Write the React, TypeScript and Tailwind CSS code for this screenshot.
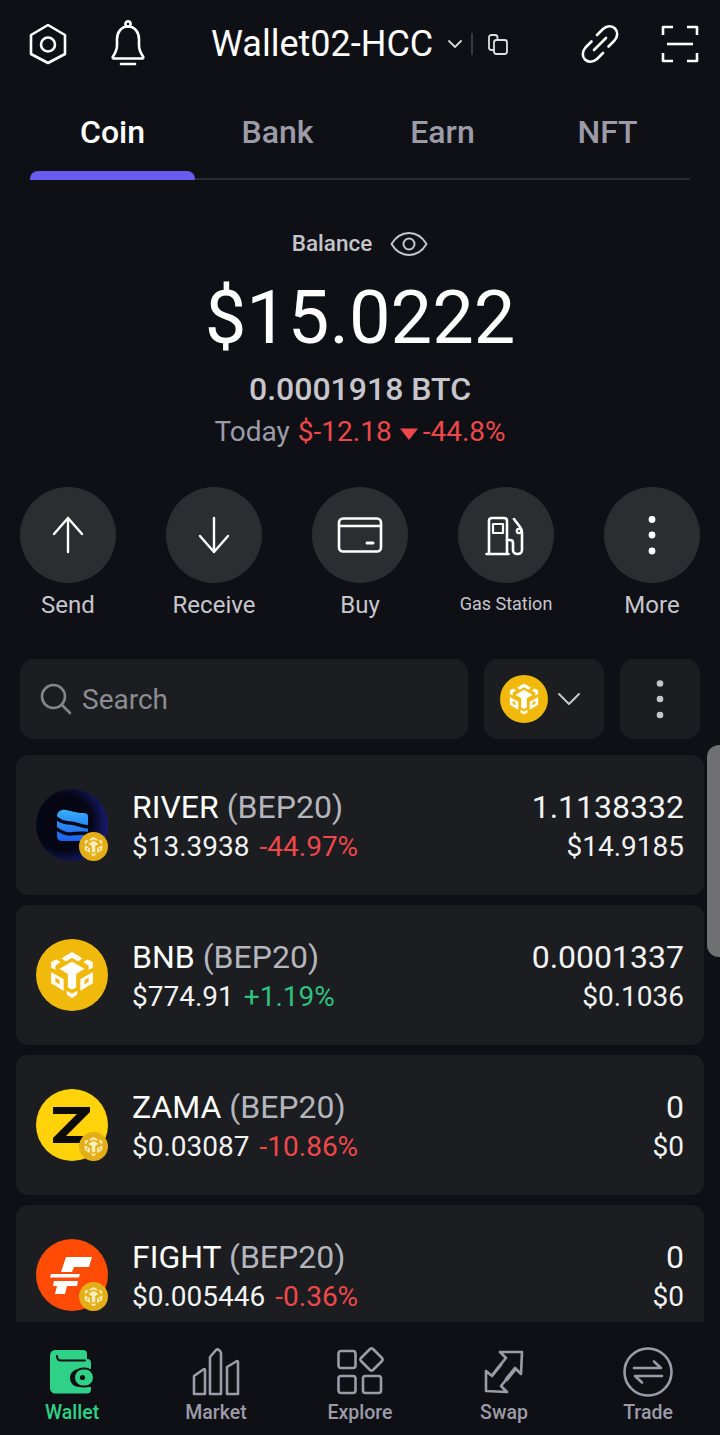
import React from "react";

const S = { fill: "none", stroke: "currentColor", strokeLinecap: "round", strokeLinejoin: "round" } as const;

function BnbMark({ size, color = "#fff" }: { size: number; color?: string }) {
  return (
    <svg width={size} height={size} viewBox="0 0 48 48" fill={color}>
      <path d="M24 2l10 6-4 3-6-3.500L18 11l-4-3z" />
      <path d="M9 9l4 2.500-5 3.500v4l-4-2v-5.500z" />
      <path d="M39 9l-4 2.500 5 3.500v4l4-2v-5.500z" />
      <path d="M24 11l12 7-8 5v13l-4 2-4-2V23l-8-5z" />
      <path fillRule="evenodd" d="M4 21l12 7v11L4 32zM8 26.500l4 2.500v4l-4-2.500z" />
      <path fillRule="evenodd" d="M44 21l-12 7v11l12-7zM40 26.500L36 29v4l4-2.500z" />
      <path d="M19 39l5 3 5-3v4l-5 3-5-3z" />
    </svg>
  );
}

function Badge() {
  return (
    <div className="absolute right-0 bottom-0 flex h-[29px] w-[29px] items-center justify-center rounded-full bg-[#e3ae17]">
      <BnbMark size={21} color="#fdeebc" />
    </div>
  );
}

function RiverLogo() {
  return (
    <div className="relative h-[72px] w-[72px]">
      <svg width="72" height="72" viewBox="0 0 72 72">
        <defs>
          <radialGradient id="riv" cx="0.38" cy="0.46" r="0.66">
            <stop offset="0" stopColor="#04050c" />
            <stop offset="0.6" stopColor="#060716" />
            <stop offset="0.9" stopColor="#15186a" />
            <stop offset="1" stopColor="#221f8a" />
          </radialGradient>
          <linearGradient id="rivb" x1="0" y1="0" x2="0" y2="1">
            <stop offset="0" stopColor="#38aefb" />
            <stop offset="1" stopColor="#1c5ff0" />
          </linearGradient>
        </defs>
        <circle cx="36" cy="36" r="36" fill="url(#riv)" />
        <path d="M21 27c0-4 4-7 9-6 7 1 10 3 17 3 3 0 5 1 5 3v20c0 3-2 5-5 5H26c-3 0-5-2-5-5z" fill="url(#rivb)" />
        <path d="M18 27c5 5 9 7 16 7s11 4 20 4" fill="none" stroke="#070816" strokeWidth="3.500" />
        <path d="M18 38c5 4 10 7 16 7s12-2 20 0" fill="none" stroke="#070816" strokeWidth="3.500" />
      </svg>
      <Badge />
    </div>
  );
}

function BnbLogo() {
  return (
    <div className="flex h-[72px] w-[72px] items-center justify-center rounded-full bg-[#f0b90b]">
      <BnbMark size={50} />
    </div>
  );
}

function ZamaLogo() {
  return (
    <div className="relative h-[72px] w-[72px]">
      <div className="flex h-[72px] w-[72px] items-center justify-center rounded-full bg-[#ffd20a]">
        <svg width="72" height="72" viewBox="0 0 72 72">
          <path d="M17 18h37v5L30 47h21v7H17v-5L41 25H17z" fill="#0b0b0b" />
        </svg>
      </div>
      <Badge />
    </div>
  );
}

function FightLogo() {
  return (
    <div className="relative h-[72px] w-[72px]">
      <div className="flex h-[72px] w-[72px] items-center justify-center rounded-full bg-[#ff4b05]">
        <svg width="72" height="72" viewBox="0 0 72 72">
          <path d="M30 18h26l-3 10H38l-2 5H25z" fill="#fff" />
          <path d="M15 35h29l-1 3.500H14z" fill="#fff" />
          <path d="M18 42h24l-1 5H31l-2 8H19l2-8h-4z" fill="#fff" />
        </svg>
      </div>
      <Badge />
    </div>
  );
}

type Row = {
  logo: React.ReactNode;
  name: string;
  price: string;
  change: string;
  up?: boolean;
  amount: string;
  value: string;
};

const rows: Row[] = [
  { logo: <RiverLogo />, name: "RIVER", price: "$13.3938", change: "-44.97%", amount: "1.1138332", value: "$14.9185" },
  { logo: <BnbLogo />, name: "BNB", price: "$774.91", change: "+1.19%", up: true, amount: "0.0001337", value: "$0.1036" },
  { logo: <ZamaLogo />, name: "ZAMA", price: "$0.03087", change: "-10.86%", amount: "0", value: "$0" },
  { logo: <FightLogo />, name: "FIGHT", price: "$0.005446", change: "-0.36%", amount: "0", value: "$0" },
];

function ActionCircle({ label, small, children }: { label: string; small?: boolean; children: React.ReactNode }) {
  return (
    <div className="flex w-[96px] flex-col items-center">
      <div className="flex h-[96px] w-[96px] items-center justify-center rounded-full bg-[#2b2d30] text-white">{children}</div>
      <div className={`flex h-[30px] items-center whitespace-nowrap text-[#c6c6cc] ${small ? "mt-[5px] text-[18px]" : "mt-[7px] text-[24px]"}`}>{label}</div>
    </div>
  );
}

function NavItem({ label, active, children }: { label: string; active?: boolean; children: React.ReactNode }) {
  return (
    <div className={`flex w-[72px] flex-col items-center ${active ? "text-[#2ed186]" : "text-[#9d9ba8]"}`}>
      <div className="flex h-[50px] w-[72px] items-center justify-center">{children}</div>
      <div className="mt-[3px] text-[19.5px] leading-[26px] font-medium whitespace-nowrap">{label}</div>
    </div>
  );
}

export default function App() {
  return (
    <div className="relative flex h-[1435px] w-[720px] flex-col overflow-hidden bg-[#0f1015] font-['Roboto',sans-serif] text-white">
      {/* top bar */}
      <div className="flex h-[88px] shrink-0 items-center pr-[20px] pl-[20px]">
        <svg width="56" height="56" viewBox="0 0 56 56" className="shrink-0 text-white" {...S} strokeWidth="2.6">
          <path d="M28 9l17 10v19L28 47 11 38V19z" />
          <circle cx="28" cy="28.5" r="7" />
        </svg>
        <svg width="44" height="50" viewBox="0 0 44 50" className="ml-[30px] shrink-0 text-white" {...S} strokeWidth="2.6">
          <path d="M22 7.500c-7 0-11 6-11 13v6c0 5-2 8-4 11-.7 1-.3 2 1 2h28c1.300 0 1.700-1 1-2-2-3-4-6-4-11v-6c0-7-4-13-11-13z" />
          <circle cx="22" cy="5" r="2.600" />
          <path d="M15 45h14" />
        </svg>
        <div className="ml-[61px] text-[36px] leading-none whitespace-nowrap">Wallet02-HCC</div>
        <svg width="16" height="10" viewBox="0 0 16 10" className="ml-[14px] shrink-0 text-[#d5d5d8]" {...S} strokeWidth="1.800">
          <path d="M2 2l6 6 6-6" />
        </svg>
        <div className="ml-[8px] h-[22px] w-[1.500px] shrink-0 bg-[#3a3b40]" />
        <svg width="24" height="24" viewBox="0 0 24 24" className="ml-[13px] shrink-0 text-[#e0e0e3]" {...S} strokeWidth="1.800">
          <path d="M8 18H5.500A2.500 2.500 0 0 1 3 15.500v-10A2.500 2.500 0 0 1 5.500 3H9a2.500 2.500 0 0 1 2.500 2.500V7" />
          <rect x="8" y="8" width="13" height="14" rx="2.500" />
        </svg>
        <svg width="44" height="44" viewBox="0 0 44 44" className="ml-[68px] shrink-0 text-white" {...S} strokeWidth="2.600">
          <path d="M19 13l6-6c4-3.500 9-3.500 12-.5s3 8-.5 12l-6 6" />
          <path d="M25 31l-6 6c-4 3.500-9 3.500-12 .5s-3-8 .5-12l6-6" />
          <path d="M16 28l12-12" />
        </svg>
        <svg width="38" height="38" viewBox="0 0 38 38" className="ml-[39px] shrink-0 text-white" {...S} strokeWidth="2.600" strokeLinecap="butt">
          <path d="M2 10V2h10M26 2h10v8M2 28v8h10M36 28v8H26" />
          <path d="M6 19h26" />
        </svg>
      </div>

      {/* tabs */}
      <div className="relative mx-[30px] h-[92px] shrink-0 border-b-[2px] border-[#2b2c32]">
        <div className="flex h-[88px] items-start pt-[25px] text-[32px] leading-[38px] font-medium text-[#9d9ba8]">
          <div className="w-[165px] text-center text-white">Coin</div>
          <div className="w-[165px] text-center">Bank</div>
          <div className="w-[165px] text-center">Earn</div>
          <div className="w-[165px] text-center">NFT</div>
        </div>
        <div className="absolute -bottom-[2px] left-0 h-[9px] w-[165px] rounded-t-[8px] bg-[#6a5cf0]" />
      </div>

      {/* balance */}
      <div className="flex shrink-0 flex-col items-center pt-[46px]">
        <div className="flex h-[36px] items-center text-[#c4c4cb]">
          <span className="text-[22.5px] font-medium">Balance</span>
          <svg width="38" height="26" viewBox="0 0 38 26" className="ml-[18px]" {...S} strokeWidth="2">
            <path d="M1.500 13C6 5.500 12 2 19 2s13 3.500 17.500 11C32 20.500 26 24 19 24S6 20.500 1.500 13z" />
            <circle cx="19" cy="13" r="5.500" />
          </svg>
        </div>
        <div className="mt-[14px] h-[84px] text-[74px] leading-[84px]">$15.0222</div>
        <div className="mt-[11px] h-[36px] text-[32px] leading-[36px] font-medium text-[#c6c6cc]">0.0001918 BTC</div>
        <div className="mt-[8px] flex h-[34px] items-center text-[28px] leading-[34px]">
          <span className="text-[#9d9ba8]">Today</span>
          <span className="ml-[8px] text-[#f0474a]">$-12.18</span>
          <svg width="20" height="14" viewBox="0 0 20 14" className="mr-[4px] ml-[7px] mt-[3px]"><path d="M1 1.500h18L10 13z" fill="#f0474a" /></svg>
          <span className="text-[#f0474a]">-44.8%</span>
        </div>
      </div>

      {/* actions */}
      <div className="mt-[38px] flex h-[133px] shrink-0 justify-between px-[20px]">
        <ActionCircle label="Send">
          <svg width="36" height="38" viewBox="0 0 36 38" {...S} strokeWidth="2.400">
            <path d="M18 36V2M4 18L18 2l14 16" />
          </svg>
        </ActionCircle>
        <ActionCircle label="Receive">
          <svg width="36" height="38" viewBox="0 0 36 38" {...S} strokeWidth="2.400">
            <path d="M18 2v34M4 20l14 16 14-16" />
          </svg>
        </ActionCircle>
        <ActionCircle label="Buy">
          <svg width="46" height="38" viewBox="0 0 46 38" {...S} strokeWidth="2.600">
            <rect x="2" y="2.500" width="42" height="33" rx="4" />
            <path d="M2 10h42" />
            <path d="M30 27h6" strokeWidth="3" />
          </svg>
        </ActionCircle>
        <ActionCircle label="Gas Station" small>
          <svg width="42" height="40" viewBox="0 0 42 40" {...S} strokeWidth="2.600" className="mt-[2px]">
            <path d="M1.500 38h22M4 38V5c0-2 1-3 3-3h12c2 0 3 1 3 3v33" />
            <rect x="8" y="8" width="10" height="9" strokeWidth="2.200" />
            <path d="M22 24h3c2 0 3 1 3 3v7c0 2 1.500 4 4.500 4s4.500-2 4.500-4V16c0-2-.8-3.500-2-5l-6-8" />
            <circle cx="34" cy="15" r="2.200" strokeWidth="2.200" />
          </svg>
        </ActionCircle>
        <ActionCircle label="More">
          <svg width="10" height="40" viewBox="0 0 10 40" fill="#fff">
            <circle cx="5" cy="4.500" r="3.400" />
            <circle cx="5" cy="20" r="3.400" />
            <circle cx="5" cy="36" r="3.400" />
          </svg>
        </ActionCircle>
      </div>

      {/* search */}
      <div className="mt-[39px] flex h-[80px] shrink-0 gap-[16px] px-[20px]">
        <div className="flex w-[448px] items-center rounded-[14px] bg-[#1b1d20] pl-[20px]">
          <svg width="32" height="32" viewBox="0 0 32 32" {...S} strokeWidth="2.600" className="text-[#85868b]">
            <circle cx="13.500" cy="13.500" r="11.500" />
            <path d="M22 22l8 8" />
          </svg>
          <span className="ml-[10px] pt-[2px] text-[28px] text-[#8c8c92]">Search</span>
        </div>
        <div className="flex w-[120px] items-center rounded-[14px] bg-[#1b1d20] pl-[16px]">
          <div className="flex h-[48px] w-[48px] items-center justify-center rounded-full bg-[#f0b90b]">
            <BnbMark size={34} />
          </div>
          <svg width="24" height="14" viewBox="0 0 24 14" className="ml-[9px] text-[#c6c6cc]" {...S} strokeWidth="2">
            <path d="M2 2l10 10L22 2" />
          </svg>
        </div>
        <div className="flex w-[80px] items-center justify-center rounded-[14px] bg-[#1b1d20]">
          <svg width="10" height="40" viewBox="0 0 10 40" fill="#c6c6cc">
            <circle cx="5" cy="4.500" r="3.300" />
            <circle cx="5" cy="20" r="3.300" />
            <circle cx="5" cy="36" r="3.300" />
          </svg>
        </div>
      </div>

      {/* list */}
      <div className="mt-[16px] flex min-h-0 flex-1 flex-col gap-[10px] overflow-hidden px-[16px]">
        {rows.map((r) => (
          <div key={r.name} className="flex h-[140px] shrink-0 items-start rounded-[12px] bg-[#1b1d20] pt-[34px] pr-[20px] pl-[20px]">
            <div className="shrink-0">{r.logo}</div>
            <div className="ml-[24px] flex-1">
              <div className="h-[36px] text-[32px] leading-[36px]">
                {r.name} <span className="text-[#b5b5bd]">(BEP20)</span>
              </div>
              <div className="mt-[4px] flex h-[36px] items-center text-[28px] leading-[36px]">
                <span className="text-[#f2f2f2]">{r.price}</span>
                <span className={`ml-[10px] ${r.up ? "text-[#2ec27e]" : "text-[#f0474a]"}`}>{r.change}</span>
              </div>
            </div>
            <div className="flex flex-col items-end">
              <div className="h-[36px] text-[32px] leading-[36px] text-[#f2f2f2]">{r.amount}</div>
              <div className="mt-[4px] h-[36px] text-[28px] leading-[36px] text-[#f2f2f2]">{r.value}</div>
            </div>
          </div>
        ))}
      </div>

      {/* nav */}
      <div className="flex h-[113px] shrink-0 items-start justify-between bg-[#0f1015] pt-[25px] pr-[36px] pl-[36px]">
        <NavItem label="Wallet" active>
          <svg width="46" height="46" viewBox="0 0 46 46">
            <path d="M1 7c0-4 2-6 6-6h27c3 0 4 1.500 4 4v5c3 0 4 1.500 4 4v6H30c-5 0-9 4-9 9s4 9 9 9h12v2c0 3-1.500 4.500-4 4.500H7c-4 0-6-2-6-6z" fill="currentColor" />
            <path d="M8 7c0 3 1.500 4.500 4 4.500h24" fill="none" stroke="#0f1015" strokeWidth="2" strokeLinecap="round" />
            <rect x="25" y="19.500" width="20" height="18" rx="9" fill="currentColor" stroke="#0f1015" strokeWidth="2" />
            <circle cx="33.500" cy="28.500" r="2.600" fill="#0f1015" />
          </svg>
        </NavItem>
        <NavItem label="Market">
          <svg width="48" height="48" viewBox="0 0 48 48" {...S} strokeWidth="2.600">
            <path d="M2 46V28l10-7c.5 0 1 .5 1 1v24z" />
            <path d="M18 46V9l6-7c1-.8 2-.8 3 0 1 1 2 2 2 3v41z" />
            <path d="M35 46V19l10-6c.5 0 1 .5 1 1v32z" />
          </svg>
        </NavItem>
        <NavItem label="Explore">
          <svg width="50" height="50" viewBox="0 0 50 50" {...S} strokeWidth="2.600">
            <rect x="3.500" y="4" width="17" height="17" rx="2.500" />
            <rect x="3.500" y="29" width="17" height="17" rx="2.500" />
            <rect x="28" y="29" width="18" height="17" rx="2.500" />
            <path d="M35 2c1-.8 2-.8 3 0l9 9c.8 1 .8 2 0 3l-9 9c-1 .8-2 .8-3 0l-9-9c-.8-1-.8-2 0-3z" />
          </svg>
        </NavItem>
        <NavItem label="Swap">
          <svg width="50" height="50" viewBox="0 0 50 50" {...S} strokeWidth="2.600">
            <path d="M21 5l22 0-1 22-6-6-9 11M21 5l6 6-9 11" />
            <path d="M28 45L7 44l0-20 6 5 9-11M28 45l-6-6 9-11" />
            <path d="M14 27l8-10M36 23l-8 10" />
          </svg>
        </NavItem>
        <NavItem label="Trade">
          <svg width="50" height="50" viewBox="0 0 50 50" {...S} strokeWidth="2.600">
            <circle cx="25" cy="25" r="23.500" />
            <path d="M11 21h27l-7-6.500M39 29H12l7 6.500" />
          </svg>
        </NavItem>
      </div>

      {/* edge handle */}
      <div className="absolute top-[745px] left-[707px] h-[212px] w-[24px] rounded-[16px] bg-[#707072]" />
    </div>
  );
}
